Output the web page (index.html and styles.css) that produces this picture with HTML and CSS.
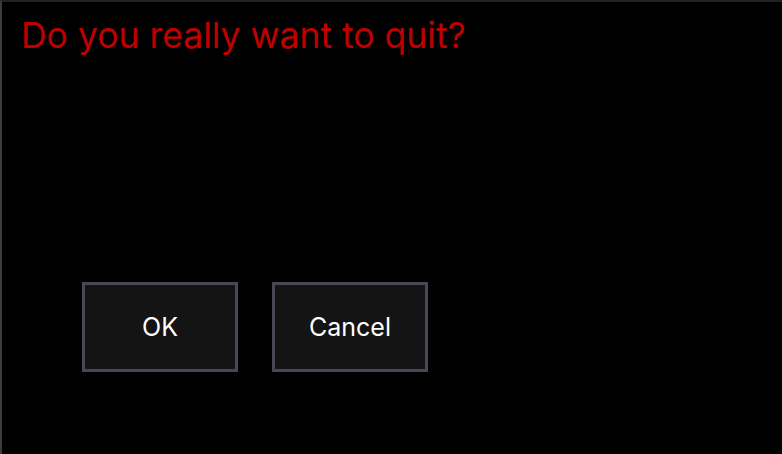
FILE: index.html
```html
<!DOCTYPE html>
<html>

<head>
    <title>Quit</title>
    <meta charset="utf-8">
    <link rel="stylesheet" href="styles.css">
</head>

<body>
    <div class="dialog">
        <h1 class="spoergsmaal">Do you really want to quit?</h1>
        <div class="knapper">
            <button class="knap">OK</button>
            <button class="knap">Cancel</button>
        </div>
    </div>
</body>

</html>
```

FILE: styles.css
```css
html,
body {
    margin: 0;
    height: 100%;
    background-color: #000;
}

.dialog {
    box-sizing: border-box;
    height: 100%;
    border-top: 2px solid #222;
    border-left: 2px solid #3c3c3c;
    padding: 12px 0 0 19px;
}

.spoergsmaal {
    margin: 0;
    height: 42px;
    font-family: Inter, "Liberation Sans", sans-serif;
    font-size: 35.5px;
    font-weight: normal;
    color: #c00000;
}

.knapper {
    display: flex;
    gap: 34px;
    margin-top: 226px;
    padding-left: 61px;
}

.knap {
    box-sizing: border-box;
    width: 156px;
    height: 90px;
    background-color: #141414;
    border: 3px solid #4a4655;
    color: #fff;
    font-family: Inter, "Liberation Sans", sans-serif;
    font-size: 25px;
}
```
